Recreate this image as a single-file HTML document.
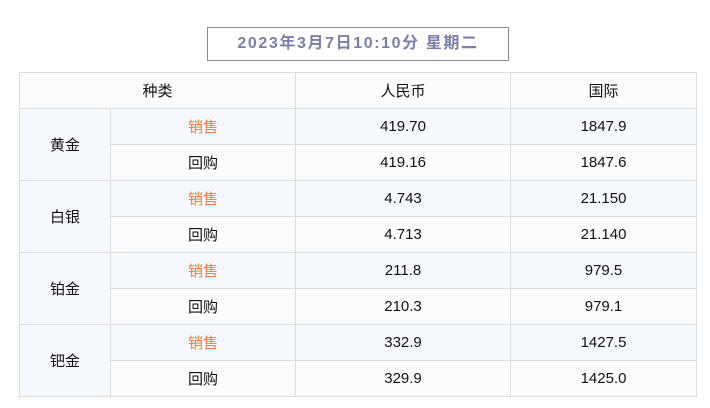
<!DOCTYPE html>
<html><head><meta charset="utf-8"><style>
body{margin:0;width:710px;height:408px;background:#fff;font-family:"Liberation Sans","Noto Sans CJK SC",sans-serif;position:relative}
.t{position:absolute;left:207px;top:27px;width:300px;height:32px;border:1px solid #8a8a8a;color:#7b7fa8;font-weight:bold;font-size:16px;line-height:32px;text-align:center;letter-spacing:1.6px}
table{position:absolute;left:19px;top:72px;border-collapse:collapse;table-layout:fixed;width:677px}
td{border:1px solid #dcdcdc;height:35px;padding:0;text-align:center;font-size:15px;color:#111;background:#fcfcfc}
tr.a td{background:#f6f9fe}
td.k{background:#f6f9fe}
.o{color:#f27a44}
</style></head><body>
<div class="t">2023年3月7日10:10分 星期二</div>
<table>
<col style="width:91px"><col style="width:185px"><col style="width:215px"><col style="width:186px">
<tr><td colspan="2">种类</td><td>人民币</td><td>国际</td></tr>
<tr class="a"><td class="k" rowspan="2">黄金</td><td class="o">销售</td><td>419.70</td><td>1847.9</td></tr>
<tr><td>回购</td><td>419.16</td><td>1847.6</td></tr>
<tr class="a"><td class="k" rowspan="2">白银</td><td class="o">销售</td><td>4.743</td><td>21.150</td></tr>
<tr><td>回购</td><td>4.713</td><td>21.140</td></tr>
<tr class="a"><td class="k" rowspan="2">铂金</td><td class="o">销售</td><td>211.8</td><td>979.5</td></tr>
<tr><td>回购</td><td>210.3</td><td>979.1</td></tr>
<tr class="a"><td class="k" rowspan="2">钯金</td><td class="o">销售</td><td>332.9</td><td>1427.5</td></tr>
<tr><td>回购</td><td>329.9</td><td>1425.0</td></tr>
</table>
</body></html>
